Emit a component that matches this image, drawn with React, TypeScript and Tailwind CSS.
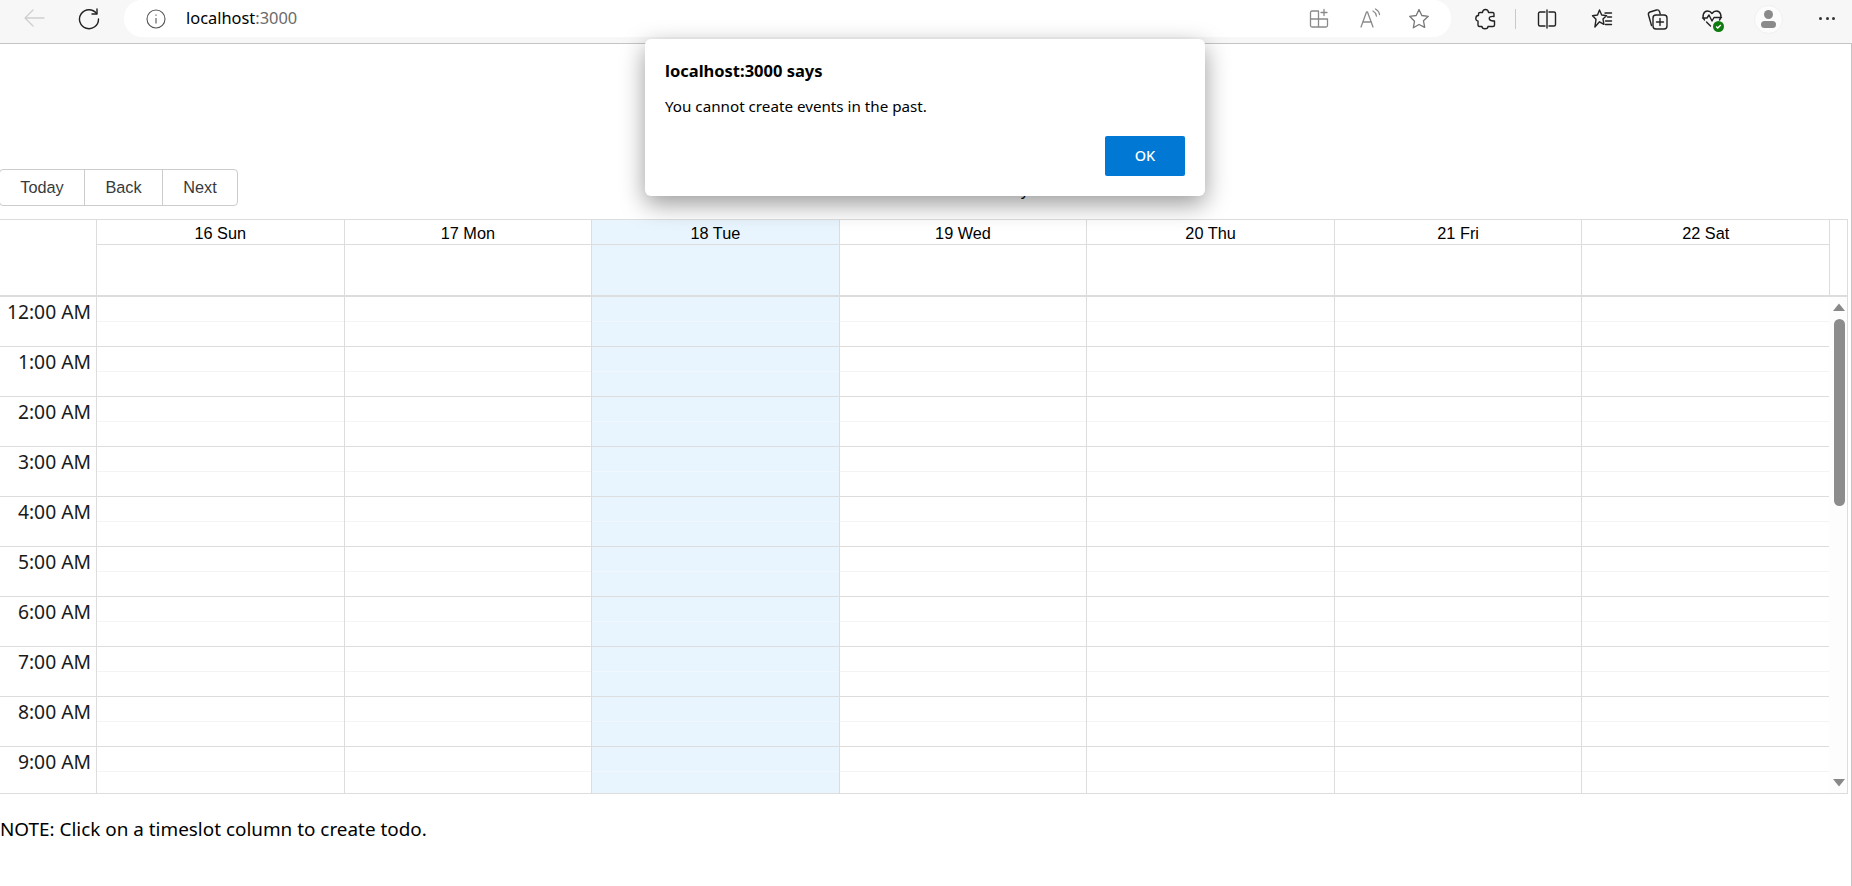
import React from "react";

const hours = ["12:00 AM","1:00 AM","2:00 AM","3:00 AM","4:00 AM","5:00 AM","6:00 AM","7:00 AM","8:00 AM","9:00 AM"];
const days = ["16 Sun","17 Mon","18 Tue","19 Wed","20 Thu","21 Fri","22 Sat"];
const TODAY = 2;

function Ico({ x, y = 8, w = 22, h = 22, vb = "0 0 22 22", c = "#333", sw = 1.3, children }: { x: number; y?: number; w?: number; h?: number; vb?: string; c?: string; sw?: number; children: React.ReactNode }) {
  return (
    <svg className="absolute" style={{ left: x, top: y }} width={w} height={h} viewBox={vb} fill="none" stroke={c} strokeWidth={sw} strokeLinecap="round" strokeLinejoin="round">
      {children}
    </svg>
  );
}

function BrowserBar() {
  return (
    <div className="relative h-[44px] shrink-0 bg-[#f7f7f7] border-b border-[#c4c4c4]">
      <Ico x={23} y={7} c="#cfcfcf"><path d="M21 11H2M2 11l8-8M2 11l8 8" /></Ico>
      <Ico x={78} y={8} c="#222" sw={1.4}><path d="M18.600 5.500A9.500 9.500 0 1 0 20.500 11" /><path d="M19 1v5h-5" /></Ico>
      <div className="absolute left-[124px] top-0 w-[1327px] h-[37px] bg-white rounded-[18px] flex items-center">
        <svg className="ml-[22px]" width="20" height="20" viewBox="0 0 20 20" fill="none" stroke="#555" strokeWidth="1.1">
          <circle cx="10" cy="10" r="9" />
          <path d="M10 9v5.500M10 5.600v1.200" />
        </svg>
        <span className="ml-[20px] text-[16.400px] font-['Noto_Sans',sans-serif] text-black">localhost<span className="text-[#6b6b6b]">:3000</span></span>
      </div>
      <Ico x={1308} c="#8a8a8a"><path d="M10.500 3H4a1.500 1.500 0 0 0-1.500 1.500v13A1.500 1.500 0 0 0 4 19h14a1.500 1.500 0 0 0 1.500-1.500V11H2.500M10.500 3v16M16 1.500v6M13 4.500h6" /></Ico>
      <Ico x={1359} c="#8a8a8a"><path d="M2 19 7.500 4h1L14 19M4 14h8.500M14 3c2 1 3 2.500 3.400 5M16.500 1c2.300 1.300 3.700 3.200 4 5.500" /></Ico>
      <Ico x={1408} c="#777"><path d="m11 1.500 2.800 6 6.500.8-4.800 4.500 1.200 6.500L11 16.500l-5.700 3.300 1.200-6.500L1.700 8.300l6.500-.8z" /></Ico>
      <Ico x={1475} c="#222" sw={1.4}><path d="M7.500 4.500C8 .5 13 .5 13.500 4.500h4a1.500 1.500 0 0 1 1.500 1.500v2.500C15 8 13.500 9.500 14.500 11.500 15.500 13 17 13 19.500 13v4a1.500 1.500 0 0 1-1.500 1.500h-5C13 21.500 7 21.500 7 18.500H4.500A1.500 1.500 0 0 1 3 17v-4C0 13 0 7.500 3.500 7.500V6A1.500 1.500 0 0 1 5 4.500z" /></Ico>
      <div className="absolute left-[1515px] top-[9px] w-[1px] h-[20px] bg-[#c9c9c9]" />
      <Ico x={1536} c="#222" sw={1.4}><path d="M9 4H4a1.500 1.500 0 0 0-1.500 1.500v11A1.500 1.500 0 0 0 4 18h5M13 4h5a1.500 1.500 0 0 1 1.500 1.500v11A1.500 1.500 0 0 1 18 18h-5M11 2v18" /></Ico>
      <Ico x={1591} c="#222" sw={1.4}><path d="m8.500 2 2.200 5 4.900.6-3.600 3.400.9 5.300-4.400-2.500-4.600 5.200 1.100-7.700L1.500 7.700l5-.7zM14 5h6.500M16.500 9h4M14.500 13h6M14.500 16.500h6" /></Ico>
      <Ico x={1646} c="#222" sw={1.4}><path d="M5.500 17.500 2.500 7A2.500 2.500 0 0 1 4 4L10.500 2a2.500 2.500 0 0 1 3 1.500l.7 2.500" /><rect x="7" y="7" width="14" height="14" rx="3" /><path d="M14 10.500v7M10.500 14h7" /></Ico>
      <Ico x={1701} y={8} c="#222" sw={1.4}><path d="M3.500 12C.5 8.500 2.500 3 6.500 3c2 0 3.500 1 4.500 2.500C12 4 13.500 3 15.500 3c4 0 6 5.500 3 9M1.500 10H6l2-3 3 6 2-3.500h7.500M5.500 14l4 4" /></Ico>
      <div className="absolute left-[1713px] top-[21px] w-[11px] h-[11px] rounded-full bg-[#107c10] flex items-center justify-center">
        <svg width="7" height="7" viewBox="0 0 9 9" fill="none" stroke="#fff" strokeWidth="1.800"><path d="m1.500 4.500 2 2 4-4" /></svg>
      </div>
      <div className="absolute left-[1754px] top-[5px] w-[29px] h-[29px] rounded-full bg-[#fcfcfc] border border-[#f0f0f0]">
        <div className="absolute left-[9px] top-[4px] w-[9px] h-[9px] rounded-full bg-[#8a8a8a]" />
        <div className="absolute left-[6px] top-[15px] w-[15px] h-[7px] rounded-[4px] bg-[#8a8a8a]" />
      </div>
      <div className="absolute left-[1819px] top-[17px] flex gap-[3.500px]">
        <div className="w-[3px] h-[3px] rounded-full bg-[#333]" />
        <div className="w-[3px] h-[3px] rounded-full bg-[#333]" />
        <div className="w-[3px] h-[3px] rounded-full bg-[#333]" />
      </div>
    </div>
  );
}

function Toolbar() {
  const labels = ["Today", "Back", "Next"];
  return (
    <div className="flex items-center h-[37px] font-['Liberation_Sans',sans-serif]">
      <div className="flex h-[37px] ml-[-1px] border border-[#ccc] rounded-[4px] text-[16.300px] text-[#373a3c]">
        {labels.map((l, i) => (
          <div key={l} className={`flex items-center justify-center ${i === 0 ? "w-[84px]" : i === 1 ? "w-[78px]" : "w-[75px]"} ${i > 0 ? "border-l border-[#ccc]" : ""}`}>{l}</div>
        ))}
      </div>
      <div className="flex-1 text-center text-[16px] text-black pt-[7px] pr-[2px]">July 16 – 22</div>
    </div>
  );
}

function Calendar() {
  return (
    <div className="mt-[13px] mr-[3px] border border-[#ddd] border-l-0 font-['Liberation_Sans',sans-serif] text-black">
      <div className="grid grid-cols-[96px_repeat(7,1fr)_18px] border-b-2 border-[#ddd]">
        <div className="h-[75px]" />
        {days.map((d, i) => (
          <div key={d} className={`border-l border-[#ddd] ${i === TODAY ? "bg-[#e8f4fe]" : ""}`}>
            <div className="h-[25px] border-b border-[#ddd] text-center text-[16.300px] leading-[26px]">{d}</div>
          </div>
        ))}
        <div className="border-l border-[#ddd]" />
      </div>
      <div className="flex h-[496px] overflow-hidden">
        <div className="grid flex-1 grid-cols-[96px_repeat(7,1fr)]">
          <div>
            {hours.map(h => (
              <div key={h} className="h-[50px] border-b border-[#ddd] text-right pr-[5px] text-[19.300px] leading-[30px] font-['Noto_Sans',sans-serif] text-[#1a1a1a]">{h}</div>
            ))}
          </div>
          {days.map((d, i) => (
            <div key={d} className={`border-l border-[#ddd] ${i === TODAY ? "bg-[#e8f4fe]" : ""}`}>
              {hours.map(h => (
                <div key={h} className="h-[50px] border-b border-[#ddd]">
                  <div className={`h-[25px] border-b ${i === TODAY ? "border-[#f0f7fd]" : "border-[#f4f4f4]"}`} />
                </div>
              ))}
            </div>
          ))}
        </div>
        <div className="w-[18px] shrink-0 pl-[2px] bg-[#fdfdfd] flex flex-col items-center">
          <svg className="mt-[6px]" width="12" height="8" viewBox="0 0 12 8"><path d="M6 0.500 12 8H0z" fill="#888" /></svg>
          <div className="w-[11px] h-[187px] mt-[8px] rounded-[6px] bg-[#8c8c8c]" />
          <div className="flex-1" />
          <svg className="mb-[6px]" width="12" height="8" viewBox="0 0 12 8"><path d="M6 7.500 12 0H0z" fill="#888" /></svg>
        </div>
      </div>
    </div>
  );
}

function Dialog() {
  return (
    <div className="absolute left-[645px] top-[-5px] w-[560px] h-[157px] bg-white rounded-[6px] shadow-[0_8px_24px_rgba(0,0,0,0.4)] px-[20px] pt-[21px] font-['Noto_Sans',sans-serif] text-black">
      <div className="text-[16.500px] leading-[22px] font-bold">localhost:3000 says</div>
      <div className="mt-[14px] text-[15.200px] leading-[20px]">You cannot create events in the past.</div>
      <div className="flex justify-end mt-[20px]">
        <div className="w-[80px] h-[40px] bg-[#0078d4] rounded-[2px] flex items-center justify-center text-white text-[14.500px] font-medium">OK</div>
      </div>
    </div>
  );
}

export default function App() {
  return (
    <div className="w-[1852px] h-[886px] flex flex-col overflow-hidden bg-white">
      <BrowserBar />
      <div className="relative flex-1 flex flex-col border-r border-[#c4c4c4]">
        <div className="h-[125px]" />
        <Toolbar />
        <Calendar />
        <div className="mt-[21px] text-[18.900px] leading-[28px] font-['Noto_Sans',sans-serif] text-black">NOTE: Click on a timeslot column to create todo.</div>
        <Dialog />
      </div>
    </div>
  );
}
